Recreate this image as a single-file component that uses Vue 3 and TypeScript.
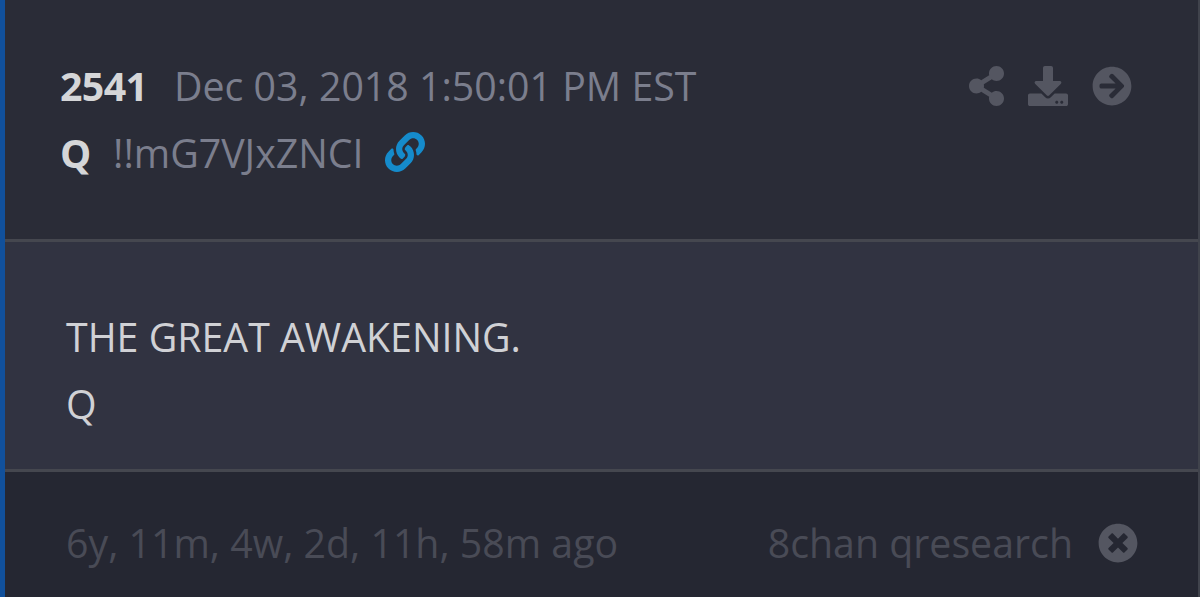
<script setup lang="ts">
interface Post {
  id: number
  date: string
  author: string
  trip: string
  lines: string[]
  age: string
  board: string
}

const post: Post = {
  id: 2541,
  date: 'Dec 03, 2018 1:50:01 PM EST',
  author: 'Q',
  trip: '!!mG7VJxZNCI',
  lines: ['THE GREAT AWAKENING.', 'Q'],
  age: '6y, 11m, 4w, 2d, 11h, 58m ago',
  board: '8chan qresearch',
}
</script>

<template>
  <article class="post">
    <header class="head">
      <div class="meta">
        <div class="row">
          <strong class="id">{{ post.id }}</strong>
          <span class="date">{{ post.date }}</span>
        </div>
        <div class="row">
          <strong class="author">{{ post.author }}</strong>
          <span class="trip">{{ post.trip }}</span>
          <svg class="icon link" viewBox="0 0 512 512"><path d="M326.612 185.391c59.747 59.809 58.927 155.698.36 214.59-.11.12-.24.25-.36.37l-67.2 67.2c-59.27 59.27-155.699 59.262-214.96 0-59.27-59.26-59.27-155.7 0-214.96l37.106-37.106c9.84-9.84 26.786-3.3 27.294 10.606.648 17.722 3.826 35.527 9.69 52.721 1.986 5.822.567 12.262-3.783 16.612l-13.087 13.087c-28.026 28.026-28.905 73.66-1.155 101.96 28.024 28.579 74.086 28.749 102.325.51l67.2-67.19c28.191-28.191 28.073-73.757 0-101.83-3.701-3.694-7.429-6.564-10.341-8.569a16.037 16.037 0 0 1-6.947-12.606c-.396-10.567 3.348-21.456 11.698-29.806l21.054-21.055c5.521-5.521 14.182-6.199 20.584-1.731a152.482 152.482 0 0 1 20.522 17.197zM467.547 44.449c-59.261-59.262-155.69-59.27-214.96 0l-67.2 67.2c-.12.12-.25.25-.36.37-58.566 58.892-59.387 154.781.36 214.59a152.454 152.454 0 0 0 20.521 17.196c6.402 4.468 15.064 3.789 20.584-1.731l21.054-21.055c8.35-8.35 12.094-19.239 11.698-29.806a16.037 16.037 0 0 0-6.947-12.606c-2.912-2.005-6.64-4.875-10.341-8.569-28.073-28.073-28.191-73.639 0-101.83l67.2-67.19c28.239-28.239 74.3-28.069 102.325.51 27.75 28.3 26.872 73.934-1.155 101.96l-13.087 13.087c-4.35 4.35-5.769 10.79-3.783 16.612 5.864 17.194 9.042 34.999 9.69 52.721.509 13.906 17.454 20.446 27.294 10.606l37.106-37.106c59.271-59.259 59.271-155.699.001-214.959z" /></svg>
        </div>
      </div>
      <div class="actions">
        <svg class="icon share" viewBox="0 0 448 512"><path d="M352 320c-22.608 0-43.387 7.819-59.79 20.895l-102.486-64.054a96.551 96.551 0 0 0 0-41.683l102.486-64.054C308.613 184.181 329.392 192 352 192c53.019 0 96-42.981 96-96S405.019 0 352 0s-96 42.981-96 96c0 7.158.79 14.13 2.276 20.841L155.79 180.895C139.387 167.819 118.608 160 96 160c-53.019 0-96 42.981-96 96s42.981 96 96 96c22.608 0 43.387-7.819 59.79-20.895l102.486 64.054A96.301 96.301 0 0 0 256 416c0 53.019 42.981 96 96 96s96-42.981 96-96-42.981-96-96-96z" /></svg>
        <svg class="icon" viewBox="0 0 512 512"><path d="M216 0h80c13.3 0 24 10.7 24 24v168h87.7c17.8 0 26.7 21.5 14.1 34.1L269.7 378.3c-7.5 7.5-19.8 7.5-27.3 0L90.1 226.1c-12.6-12.6-3.7-34.1 14.1-34.1H192V24c0-13.3 10.7-24 24-24zm296 376v112c0 13.3-10.7 24-24 24H24c-13.3 0-24-10.7-24-24V376c0-13.3 10.7-24 24-24h146.7l49 49c20.1 20.1 52.5 20.1 72.6 0l49-49H488c13.3 0 24 10.7 24 24zm-124 88c0-11-9-20-20-20s-20 9-20 20 9 20 20 20 20-9 20-20zm64 0c0-11-9-20-20-20s-20 9-20 20 9 20 20 20 20-9 20-20z" /></svg>
        <svg class="icon" viewBox="0 0 512 512"><path d="M256 8c137 0 248 111 248 248S393 504 256 504 8 393 8 256 119 8 256 8zm-28.9 143.6l75.5 72.4H120c-13.3 0-24 10.7-24 24v16c0 13.3 10.7 24 24 24h182.6l-75.5 72.4c-9.7 9.3-9.9 24.8-.4 34.3l11 10.9c9.4 9.4 24.6 9.4 33.9 0L404.3 273c9.4-9.4 9.4-24.6 0-33.9L271.6 106.3c-9.4-9.4-24.6-9.4-33.9 0l-11 10.9c-9.5 9.6-9.3 25.1.4 34.4z" /></svg>
      </div>
    </header>
    <section class="body">
      <div v-for="line in post.lines" :key="line">{{ line }}</div>
    </section>
    <footer class="foot">
      <span class="age">{{ post.age }}</span>
      <span class="board">{{ post.board }}</span>
      <svg class="icon" viewBox="0 0 512 512"><path d="M256 8C119 8 8 119 8 256s111 248 248 248 248-111 248-248S393 8 256 8zm121.6 313.1c4.7 4.7 4.7 12.3 0 17L338 377.6c-4.7 4.7-12.3 4.7-17 0L256 312l-65.1 65.6c-4.7 4.7-12.3 4.7-17 0L134.4 338c-4.7-4.7-4.7-12.3 0-17l65.6-65-65.6-65.1c-4.7-4.7-4.7-12.3 0-17l39.6-39.6c4.7-4.7 12.3-4.7 17 0l65 65.7 65.1-65.6c4.7-4.7 12.3-4.7 17 0l39.6 39.6c4.7 4.7 4.7 12.3 0 17L312 256l65.6 65.1z" /></svg>
    </footer>
  </article>
</template>

<style>
body {
  margin: 0;
  background: #2a2c37;
}
</style>

<style scoped>
.post {
  box-sizing: border-box;
  width: 100%;
  height: 597px;
  display: flex;
  flex-direction: column;
  overflow: hidden;
  border-left: 5px solid #11509b;
  border-right: 2px solid #40434c;
  font: 400 39.3px/67px "Open Sans", sans-serif;
  white-space: nowrap;
}
.head {
  box-sizing: border-box;
  height: 242px;
  display: flex;
  justify-content: space-between;
  padding: 53px 66px 0 55px;
  border-bottom: 3px solid #45474f;
  background: #2a2c37;
}
.row {
  display: flex;
  align-items: center;
  height: 67px;
}
.id,
.author {
  font-weight: 700;
  color: #d5d6d8;
}
.id {
  width: 114px;
  letter-spacing: -0.6px;
}
.author {
  width: 53px;
}
.date,
.trip {
  color: #7b7e8d;
}
.icon {
  display: block;
  flex: none;
  width: 40px;
  height: 40px;
  fill: #545661;
}
.link {
  margin: 0 0 3px 21.5px;
  fill: #158bcb;
}
.share {
  width: 35px;
}
.actions {
  display: flex;
  gap: 24px;
  padding-top: 12.5px;
}
.body {
  box-sizing: border-box;
  height: 230px;
  padding: 62px 61px 0;
  border-bottom: 3px solid #45474f;
  background: #313341;
  color: #d0d1d5;
}
.foot {
  flex: 1;
  display: flex;
  align-items: flex-start;
  padding: 38px 60px 0 61px;
  background: #252732;
  color: #494b56;
}
.age {
  flex: 1;
}
.foot .icon {
  margin: 12.5px 0 0 25px;
}
</style>
